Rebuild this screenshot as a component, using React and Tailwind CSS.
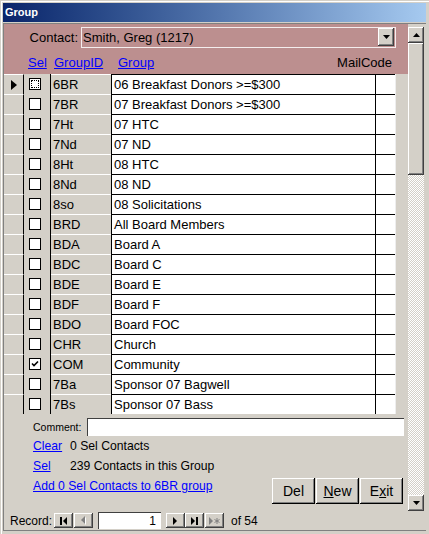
import React from "react";

const rows = [
  ["6BR", "06 Breakfast Donors >=$300"],
  ["7BR", "07 Breakfast Donors >=$300"],
  ["7Ht", "07 HTC"],
  ["7Nd", "07 ND"],
  ["8Ht", "08 HTC"],
  ["8Nd", "08 ND"],
  ["8so", "08 Solicitations"],
  ["BRD", "All Board Members"],
  ["BDA", "Board A"],
  ["BDC", "Board C"],
  ["BDE", "Board E"],
  ["BDF", "Board F"],
  ["BDO", "Board FOC"],
  ["CHR", "Church"],
  ["COM", "Community"],
  ["7Ba", "Sponsor 07 Bagwell"],
  ["7Bs", "Sponsor 07 Bass"],
];

const raised =
  "bg-[#d4d0c8] shadow-[inset_-1px_-1px_0_#404040,inset_1px_1px_0_#ffffff,inset_-2px_-2px_0_#808080]";
const btn =
  "bg-[#d4d0c8] shadow-[inset_-1px_-1px_0_#000000,inset_1px_1px_0_#ffffff,inset_-2px_-2px_0_#808080]";

function DownArrow() {
  return (
    <svg width="7" height="4" viewBox="0 0 7 4">
      <path d="M0 0H7L3.5 4Z" fill="#000" />
    </svg>
  );
}
function UpArrow() {
  return (
    <svg width="7" height="4" viewBox="0 0 7 4">
      <path d="M0 4H7L3.5 0Z" fill="#000" />
    </svg>
  );
}

function CheckBox({ checked, focus }) {
  return (
    <div className="w-[12px] h-[12px] border border-black bg-white flex items-center justify-center">
      {focus && <div className="w-[8px] h-[8px] border border-dotted border-black" />}
      {checked && (
        <svg width="8" height="8" viewBox="0 0 8 8">
          <path d="M1 3.5L3 5.5L7 1.5" stroke="#000" strokeWidth="1.6" fill="none" />
        </svg>
      )}
    </div>
  );
}

function NavBtn({ children }) {
  return (
    <div className={`w-[19px] h-[15px] flex items-center justify-center ${raised}`}>{children}</div>
  );
}

export default function App() {
  return (
    <div className="w-[429px] h-[534px] overflow-hidden bg-[#d4d0c8] pt-[3px] pl-[3px] pr-[3px] font-['Liberation_Sans',Arial,sans-serif] text-black shadow-[inset_1px_1px_0_#d4d0c8,inset_2px_2px_0_#ffffff]">
      {/* Title bar */}
      <div className="h-[19px] bg-gradient-to-r from-[#0a246a] to-[#a6caf0] flex items-center pl-[2px]">
        <span className="text-white font-bold text-[11px] leading-none">Group</span>
      </div>
      {/* Body */}
      <div className="mt-[1px] border-t border-l border-[#808080] border-b h-[508px] flex flex-col">
        <div className="flex h-[487px]">
          {/* main column */}
          <div className="w-[404px] flex flex-col">
            {/* header */}
            <div className="h-[50px] bg-[#bc8f8f] pt-[3px] flex flex-col">
              <div className="flex items-center h-[21px]">
                <span className="w-[74px] text-right text-[13px] leading-none">Contact:</span>
                <div className="ml-[3px] w-[315px] h-[21px] border border-[#f4eeee] flex items-center justify-between pl-[1px] pr-[1px]">
                  <span className="text-[13px] leading-none">Smith, Greg (1217)</span>
                  <div className={`w-[16px] h-[18px] mb-[1px] flex items-center justify-center ${raised}`}>
                    <DownArrow />
                  </div>
                </div>
              </div>
              <div className="mt-[4px] h-[20px] flex items-center text-[13px] leading-none pl-[24px] pr-[16px]">
                <span className="w-[26px] text-[#0000ff] underline">Sel</span>
                <span className="w-[64px] text-[#0000ff] underline">GroupID</span>
                <span className="text-[#0000ff] underline">Group</span>
                <span className="ml-auto">MailCode</span>
              </div>
            </div>
            {/* rows */}
            <div className="flex flex-col">
              {rows.map(([id, name], i) => (
                <div key={id} className="h-[20px] flex text-[13px] leading-none">
                  <div className="w-[20px] border-r border-black bg-[#d4d0c8] border-t border-t-white flex items-center justify-center">
                    {i === 0 && (
                      <svg width="6" height="10" viewBox="0 0 6 10" className="ml-[1px]">
                        <path d="M0 0L6 5L0 10Z" fill="#000" />
                      </svg>
                    )}
                  </div>
                  <div className="w-[27px] border-r border-black flex items-center pl-[5px]">
                    <CheckBox checked={id === "COM"} focus={i === 0} />
                  </div>
                  <div className="w-[60px] bg-[#d4d0c8] border-t border-white flex items-center pl-[2px]">
                    {id}
                  </div>
                  <div className="w-[264px] bg-white border-l border-t border-black flex items-center pl-[2px] whitespace-nowrap">
                    {name}
                  </div>
                  <div className="w-[20px] bg-white border-l border-t border-black" />
                  <div className="w-[1px] bg-[#eeeeee]" />
                </div>
              ))}
            </div>
            {/* footer */}
            <div className="flex-1 flex flex-col">
              <div className="mt-[4px] h-[18px] flex items-center">
                <span className="w-[83px] pl-[29px] text-[10.5px] leading-none">Comment:</span>
                <div className="w-[317px] h-[18px] bg-white shadow-[inset_1px_1px_0_#404040,inset_-1px_-1px_0_#ffffff]" />
              </div>
              <div className="flex">
                <div className="flex flex-col pl-[29px] text-[12.2px] leading-none">
                  <div className="h-[20px] flex items-center">
                    <span className="w-[37px] text-[#0000ff] underline">Clear</span>
                    <span>0 Sel Contacts</span>
                  </div>
                  <div className="h-[20px] flex items-center">
                    <span className="w-[37px] text-[#0000ff] underline">Sel</span>
                    <span>239 Contacts in this Group</span>
                  </div>
                  <div className="h-[20px] flex items-center">
                    <span className="text-[#0000ff] underline whitespace-nowrap">Add 0 Sel Contacts to 6BR group</span>
                  </div>
                </div>
                <div className="ml-auto mr-[5px] pt-[42px] flex gap-[1px]">
                  <div className={`w-[43px] h-[26px] flex items-center justify-center text-[14px] ${btn}`}>
                    Del
                  </div>
                  <div className={`w-[43px] h-[26px] flex items-center justify-center text-[14px] ${btn}`}>
                    <span><span className="underline">N</span>ew</span>
                  </div>
                  <div className={`w-[43px] h-[26px] flex items-center justify-center text-[14px] ${btn}`}>
                    <span>E<span className="underline">x</span>it</span>
                  </div>
                </div>
              </div>
            </div>
          </div>
          {/* scrollbar */}
          <div className="w-[16px] pt-[3px] flex flex-col">
            <div className={`h-[16px] flex items-center justify-center ${raised}`}>
              <UpArrow />
            </div>
            <div className={`h-[132px] ${raised}`} />
            <div className="flex-1 [background-image:repeating-conic-gradient(#ffffff_0%_25%,#d4d0c8_0%_50%)] [background-size:2px_2px]" />
            <div className={`h-[16px] flex items-center justify-center ${raised}`}>
              <DownArrow />
            </div>
          </div>
        </div>
        {/* nav bar */}
        <div className="h-[19px] flex items-center pl-[6px] text-[12px] leading-none">
          <span className="w-[44px]">Record:</span>
          <div className="flex gap-[1px]">
            <NavBtn>
              <svg width="8" height="8" viewBox="0 0 8 8">
                <rect x="0" y="0" width="2" height="8" fill="#000" />
                <path d="M7 0V8L3 4Z" fill="#000" />
              </svg>
            </NavBtn>
            <NavBtn>
              <svg width="6" height="9" viewBox="0 0 6 9">
                <path d="M5 1V9L1 5Z" fill="#ffffff" />
                <path d="M4 0V8L0 4Z" fill="#808080" />
              </svg>
            </NavBtn>
          </div>
          <div className="ml-[5px] w-[63px] h-[17px] bg-white shadow-[inset_1px_1px_0_#404040,inset_-1px_-1px_0_#ffffff] flex items-center justify-end pr-[5px]">
            1
          </div>
          <div className="ml-[5px] flex">
            <NavBtn>
              <svg width="5" height="8" viewBox="0 0 5 8">
                <path d="M0 0V8L4 4Z" fill="#000" />
              </svg>
            </NavBtn>
            <NavBtn>
              <svg width="8" height="8" viewBox="0 0 8 8">
                <path d="M0 0V8L4 4Z" fill="#000" />
                <rect x="5" y="0" width="2" height="8" fill="#000" />
              </svg>
            </NavBtn>
            <div className="ml-[1px]">
              <NavBtn>
                <svg width="11" height="8" viewBox="0 0 11 8">
                  <path d="M0 0V8L4 4Z" fill="#808080" />
                  <path d="M8 1V7M5.5 2.5L10.5 5.5M10.5 2.5L5.5 5.5" stroke="#808080" strokeWidth="1" />
                </svg>
              </NavBtn>
            </div>
          </div>
          <span className="ml-[7px]">of 54</span>
        </div>
      </div>
    </div>
  );
}
